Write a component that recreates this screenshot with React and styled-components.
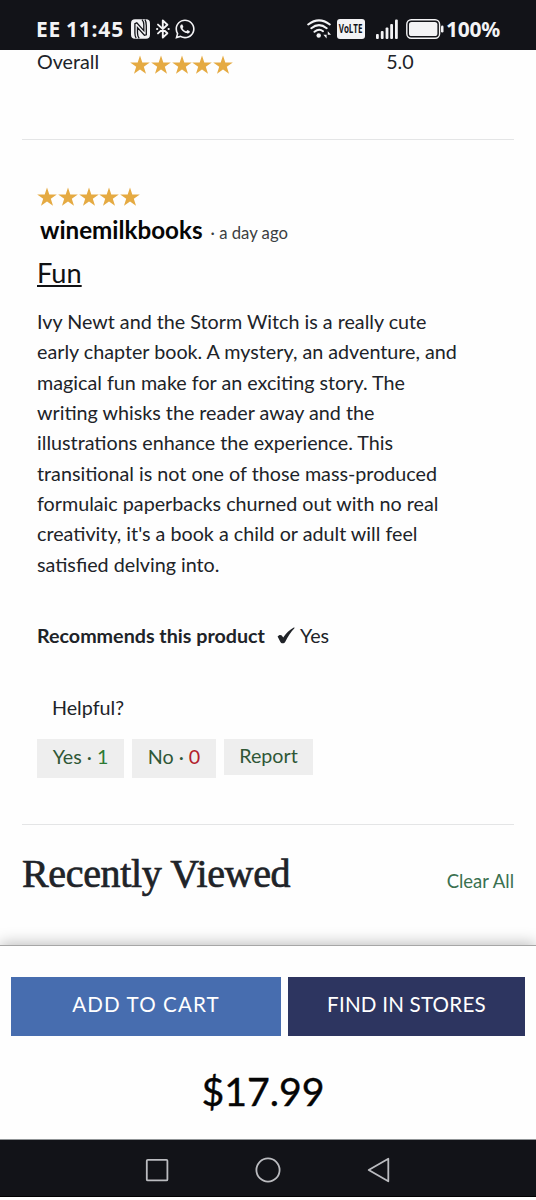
import React from 'react';
import styled, { createGlobalStyle } from 'styled-components';
import { FaWhatsapp } from 'react-icons/fa';

const Global = createGlobalStyle`
  * { box-sizing: border-box; }
  body { margin: 0; background: #fefefe; }
  h2, h3, p { margin: 0; font-weight: 400; }
  button { border: 0; margin: 0; font: inherit; white-space: nowrap; }
  svg { display: block; flex: none; }
`;

const Screen = styled.div`
  width: 536px;
  height: 1200px;
  overflow: hidden;
  display: flex;
  flex-direction: column;
  background: #fefefe;
  color: #202328;
  font-family: Lato, 'Liberation Sans', sans-serif;
  font-size: 19.7px;
`;

const StatusBar = styled.header`
  flex: none;
  height: 50px;
  padding: 8px 37px 0 36px;
  display: flex;
  justify-content: space-between;
  align-items: center;
  background: #121318;
  color: #f3f3f5;
  font: 700 21px/24px 'Noto Sans', sans-serif;
`;

const StatusGroup = styled.div`
  display: flex;
  align-items: center;
`;

const StatusText = styled.span`
  width: ${(p) => p.$w}px;
  letter-spacing: ${(p) => p.$ls || 0}px;
  white-space: nowrap;
`;

const Gap = styled.i`
  width: ${(p) => p.$w}px;
`;

const VolteBadge = styled.span`
  width: 28px;
  height: 20px;
  border-radius: 3px;
  background: #f3f3f5;
  color: #121318;
  display: flex;
  align-items: center;
  justify-content: center;
  font: 700 12.5px/20px 'Open Sans', sans-serif;
`;

const Condensed = styled.span`
  flex: none;
  transform: scaleX(0.64);
`;

const Content = styled.main`
  flex: none;
  height: 895px;
  padding: 0 22px;
  display: flex;
  flex-direction: column;
`;

const RatingRow = styled.div`
  height: 89px;
  padding-left: 15px;
  display: flex;
  align-items: flex-start;
  line-height: 24px;
`;

const RatingLabel = styled.span`
  width: 93px;
`;

const Stars = styled.div`
  display: flex;
  gap: 0.8px;
  margin-top: ${(p) => p.$top || 0}px;
`;

const RatingValue = styled.span`
  margin-left: 153px;
`;

const Review = styled.article`
  height: 686px;
  border-top: 1px solid #e4e5e6;
  border-bottom: 1px solid #e4e5e6;
  padding: 47px 15px 0;
`;

const Byline = styled.div`
  display: flex;
  align-items: baseline;
  height: 34px;
  margin-top: 7px;
  padding-left: 3px;
  line-height: 31px;
`;

const Author = styled.span`
  color: #060606;
  font-size: 24.2px;
  font-weight: 700;
`;

const Posted = styled.span`
  margin-left: 8px;
  font-size: 16.7px;
  color: #3c3e42;
`;

const ReviewTitle = styled.h3`
  color: #101113;
  font-size: 27.2px;
  line-height: 34px;
  height: 58px;
  padding-top: 8px;
  text-decoration: underline;
  text-decoration-thickness: 2px;
  text-underline-offset: 2px;
`;

const ReviewText = styled.p`
  margin-top: 1.2px;
  line-height: 30.3px;
  white-space: nowrap;
  font-size: 19.73px;
`;

const Recommends = styled.div`
  display: flex;
  align-items: center;
  height: 30px;
  margin-top: 40.8px;
  line-height: 30px;
`;

const Strong = styled.strong`
  width: 240px;
  font-weight: 700;
`;

const RecommendAnswer = styled.span`
  margin-left: 5px;
`;

const Helpful = styled.div`
  margin: 42px 0 0 15px;
  height: 30px;
  line-height: 30px;
`;

const Actions = styled.div`
  display: flex;
  align-items: flex-start;
  gap: 8px;
  margin-top: 16px;
`;

const ActionButton = styled.button`
  width: ${(p) => p.$w}px;
  height: ${(p) => p.$h}px;
  padding: 0 0 ${(p) => p.$lift}px;
  background: #eeeeee;
  color: #2f5736;
`;

const Count = styled.span`
  color: ${(p) => (p.$negative ? '#b3202c' : '#2d7a33')};
`;

const RecentHeader = styled.div`
  height: 70px;
  display: flex;
  flex: none;
  justify-content: space-between;
  align-items: baseline;
  padding-top: 24px;
`;

const RecentTitle = styled.h2`
  font: 400 40px/50px 'Liberation Serif', serif;
  letter-spacing: -0.35px;
  -webkit-text-stroke: 0.7px #202328;
`;

const ClearAll = styled.span`
  padding-top: 1px;
  transform: translateY(1px);
  color: #3a7150;
  font-size: 18.5px;
`;

const PurchasePanel = styled.section`
  flex: none;
  height: 195px;
  padding: 31px 11px 0;
  border-top: 1px solid #a6a6a6;
  border-bottom: 1px solid #909496;
  background: #fefefe;
  box-shadow: 0 -2px 14px rgba(0, 0, 0, 0.25);
`;

const PurchaseButtons = styled.div`
  display: flex;
  gap: 7px;
`;

const PurchaseButton = styled.button`
  width: ${(p) => p.$w}px;
  height: 59px;
  padding: 0 0 6px;
  background: ${(p) => p.$bg};
  color: #fff;
  font-size: 20.6px;
  letter-spacing: ${(p) => p.$ls}px;
`;

const Price = styled.div`
  margin: 29px 0 0 -2px;
  padding-right: 8px;
  text-align: center;
  color: #050505;
  font-size: 39.3px;
  line-height: 51px;
  -webkit-text-stroke: 0.4px #050505;
`;

const NavBar = styled.nav`
  flex: none;
  height: 57px;
  padding-top: 3px;
  display: flex;
  justify-content: center;
  align-items: center;
  gap: 83px;
  background: #121318;
  border-bottom: 1px solid #000;
`;

const STAR = 'M10 0.5 L12.3 7.4 H19.8 L13.8 11.8 L16 18.8 L10 14.5 L4 18.8 L6.2 11.8 L0.2 7.4 H7.7 Z';

function StarRating({ top }) {
  return (
    <Stars $top={top}>
      {[0, 1, 2, 3, 4].map((i) => (
        <svg key={i} width="20" height="20" viewBox="0 0 20 20">
          <path d={STAR} fill="#e5aa42" />
        </svg>
      ))}
    </Stars>
  );
}

function NfcIcon() {
  return (
    <svg width="20" height="20" viewBox="0 0 20 20">
      <rect x="0" y="0.3" width="19" height="19.4" rx="4" fill="#f3f3f5" />
      <path d="M5.2 19 C3.9 17.5 3.9 16 3.9 14 V4.6 L5.8 3.8 L12.8 11.6 V5.5 C12.8 3 12.3 2 11 0.6 M14 0.6 C15.4 3 15.3 5 15.3 7 V15.8 L13.4 16.3 L6.5 8.6 V14 C6.5 16.5 7 18 8.2 19.4" fill="none" stroke="#121318" strokeWidth="1.3" />
    </svg>
  );
}

function BluetoothIcon() {
  return (
    <svg width="14" height="20" viewBox="0 0 14 20" fill="none" stroke="#f3f3f5" strokeWidth="1.9" strokeLinejoin="round" strokeLinecap="round">
      <path d="M2 5.6 L11.4 14.2 L6.8 18.6 V1.4 L11.4 5.8 L2 14.4" />
      <path d="M1 10 H1.3 M12.5 10 H12.8" />
    </svg>
  );
}

function WifiIcon() {
  return (
    <svg width="24" height="20" viewBox="0 0 24 20" fill="none" stroke="#f3f3f5" strokeWidth="2" strokeLinecap="round">
      <path d="M1.2 5.5 Q12 -2.8 22.8 5.5 M4.3 9.2 Q12 3 19.7 9.2 M7.5 12.8 Q12 9 16 12.2" />
      <circle cx="11.7" cy="16.5" r="2.2" fill="#f3f3f5" stroke="none" />
      <path d="M19.6 12.2 V19.4 L16.4 15.8 H19.6 Z M20.8 19.4 V12.2 L24 15.8 H20.8 Z" fill="#f3f3f5" stroke="none" />
    </svg>
  );
}

function SignalIcon() {
  return (
    <svg width="23" height="20" viewBox="0 0 23 20" fill="#f3f3f5">
      <rect x="0" y="15" width="2.8" height="5" rx="1" />
      <rect x="4.8" y="12" width="2.8" height="8" rx="1" />
      <rect x="9.6" y="8.5" width="2.8" height="11.5" rx="1" />
      <rect x="14.2" y="5" width="2.8" height="15" rx="1" />
      <rect x="19" y="0.5" width="2.8" height="19.5" rx="1" />
    </svg>
  );
}

function BatteryIcon() {
  return (
    <svg width="38" height="20" viewBox="0 0 38 20">
      <rect x="0.8" y="0.8" width="32.8" height="18.4" rx="4.5" fill="none" stroke="#f3f3f5" strokeWidth="1.4" />
      <rect x="3" y="3" width="28.4" height="14" rx="2.6" fill="#f3f3f5" />
      <rect x="35" y="6.5" width="2.5" height="7" rx="1.2" fill="#f3f3f5" />
    </svg>
  );
}

function CheckIcon() {
  return (
    <svg width="18" height="17" viewBox="0 0 18 17">
      <path d="M0.6 9.5 C1.6 7.8 3.9 7.4 4.8 8.6 L6.2 10.6 C9 6.2 12.5 2.6 16.8 0.4 C17.5 0.3 17.8 0.8 17.4 1.3 C13.7 4.9 10.9 9.6 8.3 14.8 C7.2 16.9 4.1 16.8 3.4 15 Z" fill="#202328" />
    </svg>
  );
}

function NavIcon({ children }) {
  return (
    <svg width="28" height="28" viewBox="0 0 28 28" fill="none" stroke="#bbbcc0" strokeWidth="1.8" strokeLinejoin="round">
      {children}
    </svg>
  );
}

const REVIEW_LINES = [
  'Ivy Newt and the Storm Witch is a really cute',
  'early chapter book. A mystery, an adventure, and',
  'magical fun make for an exciting story. The',
  'writing whisks the reader away and the',
  'illustrations enhance the experience. This',
  'transitional is not one of those mass-produced',
  'formulaic paperbacks churned out with no real',
  "creativity, it's a book a child or adult will feel",
  'satisfied delving into.',
];

export default function App() {
  return (
    <Screen>
      <Global />
      <StatusBar>
        <StatusGroup>
          <StatusText $w={30} $ls={0.7}>EE</StatusText>
          <StatusText $w={65} $ls={0.8}>11:45</StatusText>
          <NfcIcon />
          <Gap $w={5} />
          <BluetoothIcon />
          <Gap $w={4} />
          <FaWhatsapp size={22} />
        </StatusGroup>
        <StatusGroup>
          <WifiIcon />
          <Gap $w={6} />
          <VolteBadge>
            <Condensed>VoLTE</Condensed>
          </VolteBadge>
          <Gap $w={11} />
          <SignalIcon />
          <Gap $w={7} />
          <BatteryIcon />
          <Gap $w={2} />
          <StatusText $w={53} $ls={-0.3}>100%</StatusText>
        </StatusGroup>
      </StatusBar>

      <Content>
        <RatingRow>
          <RatingLabel>Overall</RatingLabel>
          <StarRating top={5} />
          <RatingValue>5.0</RatingValue>
        </RatingRow>

        <Review>
          <StarRating />
          <Byline>
            <Author>winemilkbooks</Author>
            <Posted>· a day ago</Posted>
          </Byline>
          <ReviewTitle>Fun</ReviewTitle>
          <ReviewText>
            {REVIEW_LINES.map((line) => (
              <React.Fragment key={line}>
                {line}
                <br />
              </React.Fragment>
            ))}
          </ReviewText>
          <Recommends>
            <Strong>Recommends this product</Strong>
            <CheckIcon />
            <RecommendAnswer>Yes</RecommendAnswer>
          </Recommends>
          <Helpful>Helpful?</Helpful>
          <Actions>
            <ActionButton $w={87} $h={39} $lift={4}>
              Yes · <Count>1</Count>
            </ActionButton>
            <ActionButton $w={84} $h={39} $lift={4}>
              No · <Count $negative>0</Count>
            </ActionButton>
            <ActionButton $w={89} $h={36} $lift={3}>Report</ActionButton>
          </Actions>
        </Review>

        <RecentHeader>
          <RecentTitle>Recently Viewed</RecentTitle>
          <ClearAll>Clear All</ClearAll>
        </RecentHeader>
      </Content>

      <PurchasePanel>
        <PurchaseButtons>
          <PurchaseButton $w={270} $bg="#476daf" $ls={1.1}>ADD TO CART</PurchaseButton>
          <PurchaseButton $w={237} $bg="#2d3560" $ls={0.2}>FIND IN STORES</PurchaseButton>
        </PurchaseButtons>
        <Price>$17.99</Price>
      </PurchasePanel>

      <NavBar>
        <NavIcon>
          <rect x="3.8" y="3.8" width="20.6" height="20.6" rx="1" />
        </NavIcon>
        <NavIcon>
          <circle cx="14" cy="14" r="11.6" />
        </NavIcon>
        <NavIcon>
          <path d="M3.7 14 L23.3 2.7 V25.3 Z" />
        </NavIcon>
      </NavBar>
    </Screen>
  );
}
